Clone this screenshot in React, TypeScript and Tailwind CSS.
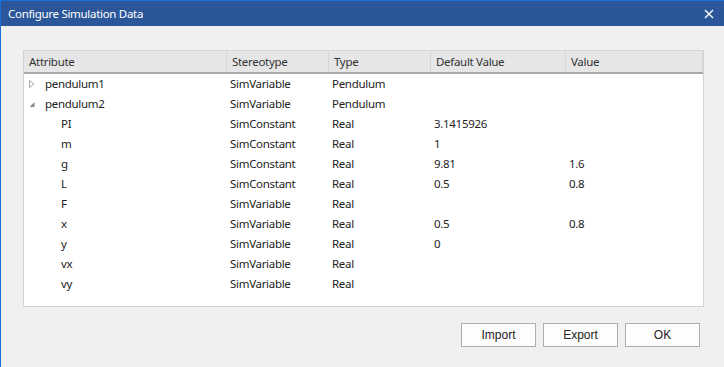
import React from "react";

type Row = { name: string; level: 0 | 1; toggle?: "closed" | "open"; st: string; type: string; def?: string; val?: string };

const rows: Row[] = [
  { name: "pendulum1", level: 0, toggle: "closed", st: "SimVariable", type: "Pendulum" },
  { name: "pendulum2", level: 0, toggle: "open", st: "SimVariable", type: "Pendulum" },
  { name: "PI", level: 1, st: "SimConstant", type: "Real", def: "3.1415926" },
  { name: "m", level: 1, st: "SimConstant", type: "Real", def: "1" },
  { name: "g", level: 1, st: "SimConstant", type: "Real", def: "9.81", val: "1.6" },
  { name: "L", level: 1, st: "SimConstant", type: "Real", def: "0.5", val: "0.8" },
  { name: "F", level: 1, st: "SimVariable", type: "Real" },
  { name: "x", level: 1, st: "SimVariable", type: "Real", def: "0.5", val: "0.8" },
  { name: "y", level: 1, st: "SimVariable", type: "Real", def: "0" },
  { name: "vx", level: 1, st: "SimVariable", type: "Real" },
  { name: "vy", level: 1, st: "SimVariable", type: "Real" },
];

const cols = "grid grid-cols-[203px_102px_102px_135px_1fr]";

function Toggle({ kind }: { kind: "closed" | "open" }) {
  if (kind === "closed")
    return (
      <svg width="8" height="10" viewBox="0 0 8 10" className="shrink-0">
        <path d="M1.5 1.5 L6 5 L1.5 8.5 Z" fill="none" stroke="#a6a6a6" strokeWidth="1" />
      </svg>
    );
  return (
    <svg width="8" height="10" viewBox="0 0 8 10" className="shrink-0">
      <path d="M6.5 3 L6.5 8 L1.5 8 Z" fill="#8a8a8a" />
    </svg>
  );
}

export default function App() {
  return (
    <div
      className="w-[724px] h-[367px] bg-[#f0f0f0] border-l border-[#1b6fd8] flex flex-col text-[11.5px] text-[#1e1e1e]"
      style={{ fontFamily: '"Noto Sans", "Open Sans", sans-serif' }}
    >
      <div className="h-[26px] shrink-0 bg-[#2b579a] border-t border-[#1b6fd8] flex items-center justify-between pl-[7px] pr-[10px]">
        <span className="text-white text-[11.5px] tracking-[-0.3px] pt-[1px]">Configure Simulation Data</span>
        <svg width="10" height="10" viewBox="0 0 10 10">
          <path d="M1 1 L9 9 M9 1 L1 9" stroke="#ffffff" strokeWidth="1.4" />
        </svg>
      </div>
      <div className="flex flex-col pl-[22px] pr-[20px] pt-[24px]">
        <div className="h-[257px] border border-[#d4d4d4] bg-white flex flex-col">
          <div className={`${cols} h-[23px] shrink-0 bg-[#e6e6e6] border-b-2 border-[#a9a9a9] text-[#333]`}>
            {["Attribute", "Stereotype", "Type", "Default Value", "Value"].map((h) => (
              <div key={h} className="flex items-center pl-[5px] border-r border-[#d6d6d6] tracking-[-0.3px]">
                <span>{h}</span>
              </div>
            ))}
          </div>
          <div className="flex flex-col tracking-[-0.3px] text-[#222]">
            {rows.map((r) => (
              <div key={r.name} className={`${cols} h-[20px] items-center`}>
                <div className="flex items-center">
                  {r.level === 0 ? (
                    <div className="flex items-center pl-[4px] gap-[9px]">
                      <Toggle kind={r.toggle!} />
                      <span>{r.name}</span>
                    </div>
                  ) : (
                    <span className="pl-[37px]">{r.name}</span>
                  )}
                </div>
                <div className="pl-[3px]">{r.st}</div>
                <div className="pl-[3px]">{r.type}</div>
                <div className="pl-[3px]">{r.def ?? ""}</div>
                <div className="pl-[3px]">{r.val ?? ""}</div>
              </div>
            ))}
          </div>
        </div>
        <div className="flex justify-end gap-[7px] mt-[16px] mr-[4px]">
          {["Import", "Export", "OK"].map((b) => (
            <button
              key={b}
              className="w-[75px] h-[24px] border border-[#adadad] bg-[#fdfdfd] text-[12px] text-[#222] flex items-center justify-center"
              style={{ fontFamily: '"Liberation Sans", Arial, sans-serif' }}
            >
              {b}
            </button>
          ))}
        </div>
      </div>
    </div>
  );
}
